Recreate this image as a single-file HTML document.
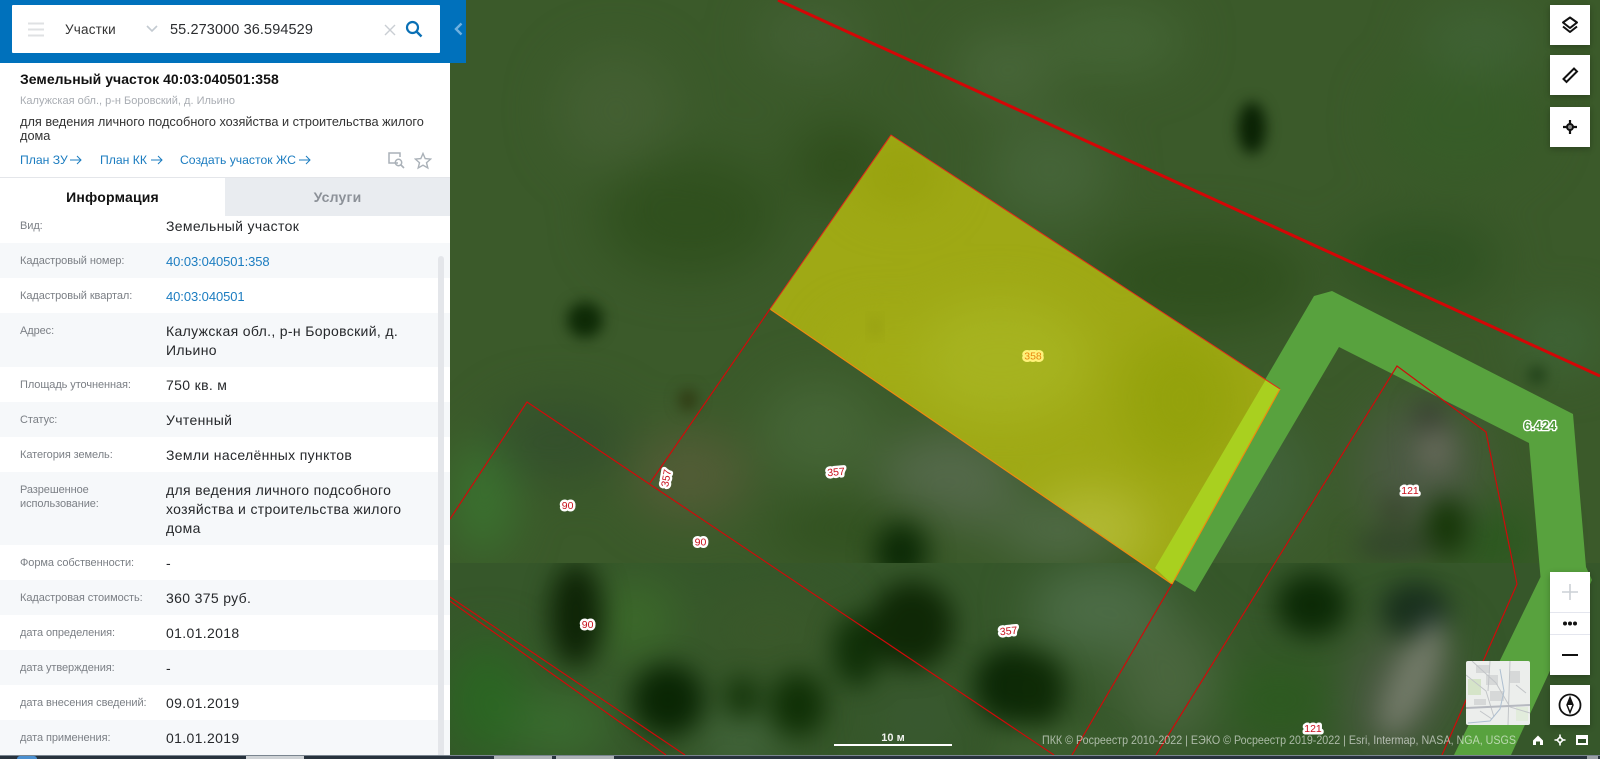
<!DOCTYPE html>
<html lang="ru">
<head>
<meta charset="utf-8">
<title>ПКК</title>
<style>
html,body{margin:0;padding:0;width:1608px;height:759px;overflow:hidden;background:#fff;font-family:"Liberation Sans","Noto Sans CJK SC",sans-serif}
.a{position:absolute}
#map{position:absolute;left:0;top:0;width:1600px;height:755px}
#side{position:absolute;left:0;top:0;width:450px;height:755px;background:#fff;overflow:hidden}
.row{position:absolute;left:0;width:450px}
.row.alt{background:#f6f8fa}
.lab{position:absolute;left:20px;font-size:11px;line-height:14px;color:#7b7f85;letter-spacing:-.08px}
.val{position:absolute;left:166px;font-size:14px;line-height:19px;color:#26282b;letter-spacing:.34px;width:272px}
.val a{color:#1b7cc0;text-decoration:none;font-size:13px;letter-spacing:-.08px}
.btn{position:absolute;left:1550px;width:40px;background:#fff;box-shadow:0 2px 6px rgba(0,0,0,.25)}
.lnk{position:absolute;top:152px;font-size:12.2px;line-height:16px;color:#1b7cc0;white-space:nowrap}
svg text{font-family:"Liberation Sans",sans-serif}
.lb{font-size:10.5px;fill:#c8101c;stroke:#fff;stroke-width:5px;paint-order:stroke;stroke-linejoin:round;text-anchor:middle}
</style>
</head>
<body>
<svg id="map" viewBox="0 0 1600 755" xmlns="http://www.w3.org/2000/svg">
<defs>
<filter id="b1" x="-30%" y="-30%" width="160%" height="160%" color-interpolation-filters="sRGB"><feGaussianBlur stdDeviation="13"/></filter>
<filter id="b2" x="-30%" y="-30%" width="160%" height="160%" color-interpolation-filters="sRGB"><feGaussianBlur stdDeviation="24"/></filter>
<filter id="b3" x="-30%" y="-30%" width="160%" height="160%" color-interpolation-filters="sRGB"><feGaussianBlur stdDeviation="7"/></filter>
<clipPath id="topc"><rect x="0" y="0" width="1600" height="563"/></clipPath>
<clipPath id="botc"><rect x="0" y="563" width="1600" height="192"/></clipPath>
<clipPath id="yc"><path d="M891 135 L1280 389 L1172 584 L770 309 Z"/></clipPath>
</defs>
<rect width="1600" height="755" fill="#3b5a2a"/>
<g clip-path="url(#topc)">
<g filter="url(#b2)">
<ellipse cx="616" cy="110" rx="60" ry="60" fill="#435f32"/>
<ellipse cx="812" cy="35" rx="55" ry="35" fill="#436034"/>
<ellipse cx="1005" cy="70" rx="50" ry="40" fill="#476538"/>
<ellipse cx="1114" cy="40" rx="70" ry="35" fill="#446535"/>
<ellipse cx="1050" cy="170" rx="60" ry="50" fill="#456438"/>
<ellipse cx="690" cy="216" rx="90" ry="60" fill="#30501e"/>
<ellipse cx="840" cy="165" rx="50" ry="40" fill="#2f4e1c"/>
<ellipse cx="1200" cy="280" rx="110" ry="50" fill="#30501e"/>
<ellipse cx="1460" cy="120" rx="80" ry="60" fill="#375c28"/>
<ellipse cx="1480" cy="40" rx="60" ry="35" fill="#3f6234"/>
<ellipse cx="1420" cy="260" rx="80" ry="40" fill="#2f5222"/>
<ellipse cx="483" cy="497" rx="28" ry="60" fill="#3a7530"/>
<ellipse cx="560" cy="440" rx="70" ry="40" fill="#34502c"/>
<ellipse cx="690" cy="475" rx="60" ry="45" fill="#525c36"/>
<ellipse cx="950" cy="480" rx="70" ry="50" fill="#54694a"/>
<ellipse cx="820" cy="430" rx="60" ry="50" fill="#456536"/>
<ellipse cx="860" cy="530" rx="90" ry="25" fill="#30501e"/>
<ellipse cx="1060" cy="530" rx="60" ry="30" fill="#526c48"/>
<ellipse cx="1240" cy="480" rx="70" ry="70" fill="#41623a"/>
<ellipse cx="1420" cy="470" rx="60" ry="70" fill="#4c5a44"/>
<ellipse cx="1560" cy="340" rx="40" ry="30" fill="#3f6538"/>
<ellipse cx="1495" cy="540" rx="40" ry="30" fill="#27581c"/>
</g>
<g filter="url(#b3)">
<ellipse cx="1252" cy="128" rx="14" ry="26" fill="#0a2204"/>
<ellipse cx="585" cy="320" rx="18" ry="18" fill="#0e2a06"/>
<ellipse cx="688" cy="400" rx="9" ry="11" fill="#2f3a12"/>
<ellipse cx="1537" cy="375" rx="8" ry="8" fill="#1a3a14"/>
</g>
<g filter="url(#b1)">
<ellipse cx="901" cy="553" rx="26" ry="30" fill="#0c2a06"/>
<ellipse cx="1447" cy="527" rx="22" ry="30" fill="#163608"/>
<ellipse cx="1395" cy="510" rx="10" ry="12" fill="#2d3620"/>
<ellipse cx="1430" cy="420" rx="14" ry="18" fill="#343a2e"/>
<ellipse cx="1435" cy="450" rx="18" ry="24" fill="#646858"/>
<ellipse cx="1395" cy="545" rx="40" ry="14" fill="#31432a"/>
</g>
</g>
<g clip-path="url(#botc)">
<rect y="563" width="1600" height="192" fill="#36572a"/>
<g filter="url(#b2)">
<ellipse cx="487" cy="700" rx="40" ry="60" fill="#2a6622"/>
<ellipse cx="561" cy="725" rx="50" ry="30" fill="#3a6e30"/>
<ellipse cx="635" cy="620" rx="40" ry="40" fill="#3c6a2a"/>
<ellipse cx="770" cy="630" rx="70" ry="40" fill="#3a582a"/>
<ellipse cx="1100" cy="610" rx="70" ry="45" fill="#4c6c46"/>
<ellipse cx="1170" cy="680" rx="50" ry="60" fill="#4a663e"/>
<ellipse cx="1280" cy="700" rx="60" ry="40" fill="#2d5a20"/>
<ellipse cx="740" cy="740" rx="40" ry="20" fill="#486c44"/>
<ellipse cx="920" cy="720" rx="40" ry="30" fill="#3a5932"/>
<ellipse cx="1400" cy="690" rx="50" ry="70" fill="#4c5a44" transform="rotate(25 1400 690)"/>
</g>
<g filter="url(#b1)">
<ellipse cx="576" cy="615" rx="26" ry="52" fill="#0e2406"/>
<ellipse cx="668" cy="700" rx="36" ry="36" fill="#0a2604"/>
<ellipse cx="742" cy="697" rx="16" ry="20" fill="#103006"/>
<ellipse cx="798" cy="705" rx="28" ry="32" fill="#103006"/>
<ellipse cx="857" cy="650" rx="24" ry="36" fill="#103008"/>
<ellipse cx="912" cy="625" rx="42" ry="44" fill="#0f2806"/>
<ellipse cx="1012" cy="685" rx="38" ry="38" fill="#0c2806"/>
<ellipse cx="1039" cy="690" rx="26" ry="36" fill="#0e2a06"/>
<ellipse cx="1312" cy="605" rx="36" ry="32" fill="#0c2a06"/>
<ellipse cx="1415" cy="610" rx="34" ry="28" fill="#182f1c"/>
<ellipse cx="1432" cy="632" rx="10" ry="18" fill="#46525a"/>
<ellipse cx="1412" cy="680" rx="20" ry="60" fill="#727a68" transform="rotate(25 1412 680)"/>
<ellipse cx="1050" cy="745" rx="60" ry="14" fill="#3e6030"/>
</g>
</g>
<path d="M1155 568 L1314 296 L1332 291 L1573 414 L1586 567 L1592 580 L1511 755 L1454 755 L1540.5 577 L1529 443 L1339 347 L1195 592 Z" fill="#58a23e"/>
<path d="M891 135 L1280 389 L1172 584 L770 309 Z" fill="#9fa915"/>
<g clip-path="url(#yc)">
<g filter="url(#b2)">
<ellipse cx="900" cy="175" rx="40" ry="30" fill="#96a00d"/>
<ellipse cx="1180" cy="400" rx="60" ry="70" fill="#94a20c"/>
<ellipse cx="1000" cy="360" rx="90" ry="60" fill="#a6b320"/>
<ellipse cx="1090" cy="530" rx="60" ry="40" fill="#b2b934"/>
<ellipse cx="880" cy="360" rx="50" ry="40" fill="#a2ac16"/>
</g>
<ellipse cx="875" cy="327" rx="6" ry="10" fill="#969f12" filter="url(#b3)"/>
</g>
<path d="M1265.6 380 L1280 389 L1172 584 L1155 568 Z" fill="#a9d01f"/>
<path d="M770 309 L891 135 L1280 389" fill="none" stroke="#e3281a" stroke-width="1"/>
<path d="M1280 389 L1172 584 L770 309" fill="none" stroke="#ee8a10" stroke-width="1.2"/>
<path d="M778 0 L1600 376" fill="none" stroke="#d40606" stroke-width="3"/>
<g fill="none" stroke="#d00a0a" stroke-width="1.2">
<path d="M770 309 L650 483"/>
<path d="M1172 584 L1072 755"/>
<path d="M450 519 L527 402 L1054 755"/>
<path d="M450 597 L685 755"/>
<path d="M450 601 L666 755"/>
<path d="M1156 755 L1397 366 L1486 432 L1517 584 L1442 755"/>
</g>
<text class="lb" x="1033" y="359.5" style="fill:#e8860e;stroke:#fff27a">358</text>
<text class="lb" x="1410" y="494">121</text>
<text class="lb" x="1313" y="732">121</text>
<text class="lb" x="836" y="475.5" transform="rotate(-5 836 472)">357</text>
<text class="lb" x="1008.6" y="634.5" transform="rotate(-5 1008 631)">357</text>
<text class="lb" transform="translate(665.7 478) rotate(-80)" y="4">357</text>
<text class="lb" x="567.6" y="509">90</text>
<text class="lb" x="700.5" y="545.5">90</text>
<text class="lb" x="587.6" y="628">90</text>
<text x="1540" y="430" text-anchor="middle" style="font-size:13px;font-weight:bold;fill:#4f9a3a;stroke:#fff;stroke-width:2.6px;paint-order:stroke;stroke-linejoin:round">6.424</text>
<rect x="834" y="744" width="118" height="2" fill="#fff"/>
<text x="893" y="741" text-anchor="middle" style="font-size:11px;font-weight:bold;fill:#f0f2ee">10 м</text>
<text x="1042" y="744" style="font-size:12px;fill:#fff;fill-opacity:.58" textLength="474" lengthAdjust="spacingAndGlyphs">ПКК © Росреестр 2010-2022 | ЕЭКО © Росреестр 2019-2022 | Esri, Intermap, NASA, NGA, USGS</text>
<path d="M1533 740.5 L1538 735.5 L1543 740.5 L1543 745 L1540 745 L1540 741.5 L1536 741.5 L1536 745 L1533 745 Z" fill="#fff"/>
<g fill="none" stroke="#fff" stroke-width="1.6"><path d="M1560 737 L1563 740 L1560 743 L1557 740 Z"/><path d="M1560 734.5V737M1560 743V745.5M1554.5 740H1557M1563 740H1565.5"/></g>
<rect x="1576" y="735" width="12" height="10" fill="#fff"/><rect x="1578" y="739" width="8" height="4" fill="#2e4f28"/>
</svg>

<div id="side">
<div class="a" style="left:0;top:0;width:450px;height:63px;background:#0071bc"></div>
<div class="a" style="left:12px;top:5px;width:428px;height:48px;background:#fff;border-radius:1px"></div>
<svg class="a" style="left:27px;top:21px" width="18" height="16"><path d="M1 2.5H17M1 8.5H17M1 14.5H17" stroke="#dfe1e3" stroke-width="2"/></svg>
<div class="a" style="left:65px;top:21px;font-size:13.5px;line-height:18px;color:#333;letter-spacing:.2px">Участки</div>
<svg class="a" style="left:146px;top:25px" width="12" height="8"><path d="M1 1L6 6L11 1" fill="none" stroke="#c3cad1" stroke-width="1.6"/></svg>
<div class="a" style="left:170px;top:20px;font-size:14.5px;line-height:20px;color:#2b2d30;letter-spacing:.1px;white-space:nowrap">55.273000 36.594529</div>
<svg class="a" style="left:384px;top:24px" width="12" height="12"><path d="M1 1L11 11M11 1L1 11" stroke="#c9ced3" stroke-width="1.4"/></svg>
<svg class="a" style="left:405px;top:20px" width="18" height="18"><circle cx="7.5" cy="7.5" r="5.5" fill="none" stroke="#0a70b5" stroke-width="2.2"/><path d="M11.5 11.5L16.5 16.5" stroke="#0a70b5" stroke-width="2.4"/></svg>

<div class="a" style="left:20px;top:70px;font-size:14px;line-height:18px;font-weight:bold;color:#111;letter-spacing:.03px;white-space:nowrap">Земельный участок 40:03:040501:358</div>
<div class="a" style="left:20px;top:94px;font-size:11px;line-height:14px;color:#a9adb3;letter-spacing:0;white-space:nowrap">Калужская обл., р-н Боровский, д. Ильино</div>
<div class="a" style="left:20px;top:115px;width:418px;font-size:12.75px;line-height:14px;color:#333">для ведения личного подсобного хозяйства и строительства жилого дома</div>

<div class="lnk" style="left:20px">План ЗУ</div>
<svg class="a" style="left:70px;top:154px" width="12" height="12"><path d="M0 6H11M7 2L11 6L7 10" fill="none" stroke="#1b7cc0" stroke-width="1"/></svg>
<div class="lnk" style="left:100px">План КК</div>
<svg class="a" style="left:151px;top:154px" width="12" height="12"><path d="M0 6H11M7 2L11 6L7 10" fill="none" stroke="#1b7cc0" stroke-width="1"/></svg>
<div class="lnk" style="left:180px">Создать участок ЖС</div>
<svg class="a" style="left:299px;top:154px" width="12" height="12"><path d="M0 6H11M7 2L11 6L7 10" fill="none" stroke="#1b7cc0" stroke-width="1"/></svg>
<svg class="a" style="left:388px;top:152px" width="18" height="18"><path d="M10 11H1V1H12V5" fill="none" stroke="#aab1b8" stroke-width="1.5"/><circle cx="10.5" cy="10.5" r="3.2" fill="none" stroke="#aab1b8" stroke-width="1.5"/><path d="M13 13L16 16" stroke="#aab1b8" stroke-width="1.6"/></svg>
<svg class="a" style="left:414px;top:152px" width="18" height="18"><path d="M9 1.5L11.2 6.6L16.6 7.1L12.5 10.7L13.8 16L9 13.2L4.2 16L5.5 10.7L1.4 7.1L6.8 6.6Z" fill="none" stroke="#aab1b8" stroke-width="1.4"/></svg>

<div class="a" style="left:0;top:177px;width:450px;height:1px;background:#e4e6ea"></div>
<div class="a" style="left:225px;top:178px;width:225px;height:38px;background:#e9ecf0"></div>
<div class="a" style="left:0;top:188px;width:225px;text-align:center;font-size:14px;line-height:18px;font-weight:bold;color:#111;letter-spacing:.2px">Информация</div>
<div class="a" style="left:225px;top:188px;width:225px;text-align:center;font-size:14px;line-height:18px;font-weight:bold;color:#8c9198;letter-spacing:.2px">Услуги</div>

<div class="row alt" style="top:243px;height:35px"></div>
<div class="row alt" style="top:313px;height:54px"></div>
<div class="row alt" style="top:402px;height:35px"></div>
<div class="row alt" style="top:472px;height:73px"></div>
<div class="row alt" style="top:580px;height:35px"></div>
<div class="row alt" style="top:650px;height:35px"></div>
<div class="row alt" style="top:720px;height:35px"></div>
<div class="a" style="left:438px;top:256px;width:6px;height:499px;background:#e4e6ea;border-radius:3px 3px 0 0"></div>

<div class="lab" style="top:219px">Вид:</div><div class="val" style="top:217px">Земельный участок</div>
<div class="lab" style="top:254px">Кадастровый номер:</div><div class="val" style="top:252px"><a>40:03:040501:358</a></div>
<div class="lab" style="top:289px">Кадастровый квартал:</div><div class="val" style="top:287px"><a>40:03:040501</a></div>
<div class="lab" style="top:324px">Адрес:</div><div class="val" style="top:322px">Калужская обл., р-н Боровский, д. Ильино</div>
<div class="lab" style="top:378px">Площадь уточненная:</div><div class="val" style="top:376px">750 кв. м</div>
<div class="lab" style="top:413px">Статус:</div><div class="val" style="top:411px">Учтенный</div>
<div class="lab" style="top:448px">Категория земель:</div><div class="val" style="top:446px">Земли населённых пунктов</div>
<div class="lab" style="top:483px;width:130px">Разрешенное использование:</div><div class="val" style="top:481px">для ведения личного подсобного хозяйства и строительства жилого дома</div>
<div class="lab" style="top:556px">Форма собственности:</div><div class="val" style="top:554px">-</div>
<div class="lab" style="top:591px">Кадастровая стоимость:</div><div class="val" style="top:589px">360 375 руб.</div>
<div class="lab" style="top:626px">дата определения:</div><div class="val" style="top:624px">01.01.2018</div>
<div class="lab" style="top:661px">дата утверждения:</div><div class="val" style="top:659px">-</div>
<div class="lab" style="top:696px">дата внесения сведений:</div><div class="val" style="top:694px">09.01.2019</div>
<div class="lab" style="top:731px">дата применения:</div><div class="val" style="top:729px">01.01.2019</div>
</div>

<div class="a" style="left:450px;top:0;width:16px;height:63px;background:#0071bc"></div>
<svg class="a" style="left:454px;top:22px" width="9" height="14"><path d="M7.5 1.5L2 7L7.5 12.5" fill="none" stroke="#6fb1e0" stroke-width="2.4"/></svg>

<div class="btn" style="top:5px;height:40px"><svg width="40" height="40"><path d="M20 12.5L27 17.5L20 23L13 17.5Z" fill="none" stroke="#111" stroke-width="2" stroke-linejoin="round"/><path d="M13 21.5L20 27L27 21.5" fill="none" stroke="#111" stroke-width="2" stroke-linejoin="round"/></svg></div>
<div class="btn" style="top:55px;height:40px"><svg width="40" height="40"><path d="M13.5 24L24 13.5L27 16.5L16.5 27Z" fill="none" stroke="#111" stroke-width="2"/></svg></div>
<div class="btn" style="top:107px;height:40px"><svg width="40" height="40"><circle cx="20" cy="20" r="3" fill="#8a8a8a" stroke="#111" stroke-width="2"/><path d="M20 13V16.5M20 23.5V27M13 20H16.5M23.5 20H27" stroke="#111" stroke-width="2.2"/></svg></div>

<div class="btn" style="top:572px;height:103px">
<svg width="40" height="103"><path d="M20 12V28M12 20H28" stroke="#ccd0d5" stroke-width="1.6"/><path d="M0 40.5H40M0 62.5H40" stroke="#e4e6ee" stroke-width="1"/><circle cx="15" cy="51.5" r="2" fill="#111"/><circle cx="20" cy="51.5" r="2" fill="#111"/><circle cx="25" cy="51.5" r="2" fill="#111"/><path d="M12 83H28" stroke="#111" stroke-width="2"/></svg>
</div>
<div class="btn" style="top:685px;height:40px"><svg width="40" height="40"><circle cx="20" cy="20" r="10.5" fill="none" stroke="#111" stroke-width="1.8"/><path d="M20 12.5L23 20L20 27.5L17 20Z" fill="none" stroke="#111" stroke-width="1.5"/><path d="M20 12.5L23 20H17Z" fill="#111"/></svg></div>

<svg class="a" style="left:1466px;top:661px;border-radius:2px" width="64" height="64">
<rect width="64" height="64" fill="#eceeec"/>
<rect x="2" y="18" width="13" height="16" fill="#d5e4c8"/>
<rect x="50" y="46" width="12" height="14" fill="#e2ecdc"/>
<g fill="#d6d8d8"><rect x="10" y="4" width="14" height="8"/><rect x="20" y="14" width="12" height="10"/><rect x="24" y="30" width="14" height="10"/><rect x="44" y="10" width="10" height="12"/><rect x="8" y="38" width="12" height="6"/></g>
<path d="M0 14L20 30L28 56M6 0L30 22L44 46L64 52M24 0L22 30M44 0L42 64M50 24L60 32M14 50L26 58" fill="none" stroke="#c2c5c8" stroke-width="1"/>
<path d="M0 47L64 44" stroke="#b6b9c0" stroke-width="2"/>
<path d="M34 8L38 30L34 48L24 60L2 62" fill="none" stroke="#aebfd0" stroke-width="1"/>
</svg>

<div class="a" style="left:0;top:755px;width:1600px;height:4px;background:#28333d;border-top:1px solid #7a858f;box-sizing:border-box"></div>
<div class="a" style="left:17px;top:756px;width:20px;height:3px;background:#4a8fd0;border-radius:10px 10px 0 0"></div>
<div class="a" style="left:246px;top:756px;width:58px;height:3px;background:#cfd3d6"></div>
<div class="a" style="left:494px;top:756px;width:58px;height:3px;background:#aeb3b7"></div>
<div class="a" style="left:556px;top:756px;width:58px;height:3px;background:#aeb3b7"></div>
<div class="a" style="left:1587px;top:756px;width:11px;height:3px;background:#9aa0a6"></div>
<div class="a" style="left:1600px;top:0;width:8px;height:759px;background:#fff"></div>
</body>
</html>
